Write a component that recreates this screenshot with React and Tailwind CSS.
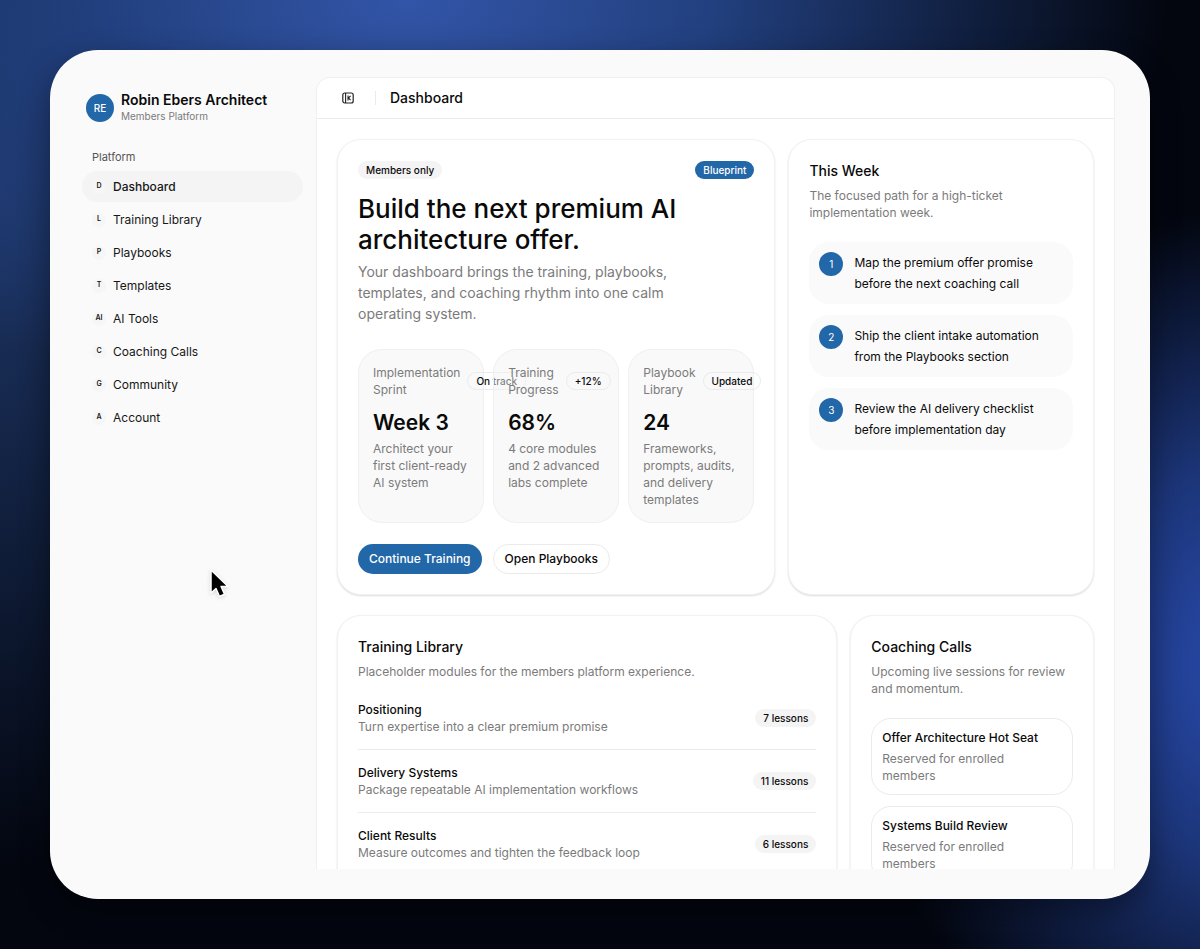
import React from 'react';

const navItems = [
  { key: 'D', label: 'Dashboard' },
  { key: 'L', label: 'Training Library' },
  { key: 'P', label: 'Playbooks' },
  { key: 'T', label: 'Templates' },
  { key: 'AI', label: 'AI Tools' },
  { key: 'C', label: 'Coaching Calls' },
  { key: 'G', label: 'Community' },
  { key: 'A', label: 'Account' },
];

const stats = [
  { label: 'Implementation Sprint', badge: 'On track', value: 'Week 3', text: 'Architect your first client-ready AI system' },
  { label: 'Training Progress', badge: '+12%', value: '68%', text: '4 core modules and 2 advanced labs complete' },
  { label: 'Playbook Library', badge: 'Updated', value: '24', text: 'Frameworks, prompts, audits, and delivery templates' },
];

const tasks = [
  'Map the premium offer promise before the next coaching call',
  'Ship the client intake automation from the Playbooks section',
  'Review the AI delivery checklist before implementation day',
];

const modules = [
  { title: 'Positioning', text: 'Turn expertise into a clear premium promise', lessons: '7 lessons' },
  { title: 'Delivery Systems', text: 'Package repeatable AI implementation workflows', lessons: '11 lessons' },
  { title: 'Client Results', text: 'Measure outcomes and tighten the feedback loop', lessons: '6 lessons' },
];

const calls = ['Offer Architecture Hot Seat', 'Systems Build Review'];

function Card({ children }) {
  return (
    <section className="min-w-0 rounded-[24px] border border-[#f2f2f2] bg-white px-5 pt-[21px] pb-5 shadow-[0_1px_2px_rgba(0,0,0,0.14)]">
      {children}
    </section>
  );
}

function CardHeader({ title, text }) {
  return (
    <>
      <h2 className="text-[14px] leading-[20px] font-medium">{title}</h2>
      <p className="mt-[6px] text-[12px] leading-[17px] text-[#7b7b7b]">{text}</p>
    </>
  );
}

function Badge({ className = '', children }) {
  return (
    <span className={`inline-flex h-[18px] shrink-0 items-center rounded-full px-2 text-[10px] font-medium whitespace-nowrap ${className}`}>
      {children}
    </span>
  );
}

function Sidebar() {
  return (
    <aside className="w-[234px] shrink-0 pt-[14px] pr-[13px]">
      <div className="flex items-center gap-[7px] pl-1">
        <div className="flex size-7 items-center justify-center rounded-full bg-[#2267a8] text-[10px] font-medium text-white">RE</div>
        <div>
          <div className="text-[14px] leading-[17px] font-semibold">Robin Ebers Architect</div>
          <div className="text-[10px] leading-[17px] text-[#7b7b7b]">Members Platform</div>
        </div>
      </div>
      <nav className="mt-[25px]">
        <h2 className="flex h-[14px] items-center pl-[10px] text-[11px] text-[#555]">Platform</h2>
        <ul className="mt-[7px] flex flex-col gap-[2px]">
          {navItems.map((item, i) => (
            <li key={item.key}>
              <a
                href="#"
                className={`flex h-[31px] items-center gap-[7px] rounded-full pl-[10px] text-[12px] text-[#171717] ${i === 0 ? 'bg-[#f4f4f4] font-medium' : ''}`}
              >
                <span className="flex size-[14px] items-center justify-center rounded-full bg-[#f6f6f6] text-[7px] font-semibold">{item.key}</span>
                {item.label}
              </a>
            </li>
          ))}
        </ul>
      </nav>
    </aside>
  );
}

function Hero() {
  return (
    <Card>
      <div className="flex items-center justify-between">
        <Badge className="bg-[#f4f4f5]">Members only</Badge>
        <Badge className="bg-[#2267a8] text-white">Blueprint</Badge>
      </div>
      <h1 className="mt-[14px] text-[26px] leading-[31px] font-medium">Build the next premium AI architecture offer.</h1>
      <p className="mt-[6px] max-w-[330px] text-[14px] leading-[21px] text-[#7b7b7b]">
        Your dashboard brings the training, playbooks, templates, and coaching rhythm into one calm operating system.
      </p>
      <div className="mt-[25px] grid grid-cols-3 gap-[9px]">
        {stats.map((stat) => (
          <div key={stat.label} className="relative min-w-0 rounded-[24px] border border-[#f0f0f0] bg-[#f3f3f3]/50 p-[14px]">
            <div className="flex items-center gap-[7px]">
              <div className="text-[12px] leading-[17px] text-[#7b7b7b]">{stat.label}</div>
              <Badge className="border border-[#ebebeb]">{stat.badge}</Badge>
            </div>
            <div className="mt-[11px] text-[21px] leading-7 font-semibold">{stat.value}</div>
            <p className="mt-[3px] text-[12px] leading-[17px] text-[#7b7b7b]">{stat.text}</p>
          </div>
        ))}
      </div>
      <div className="mt-[21px] flex gap-[11px]">
        <button className="h-[30px] rounded-full bg-[#2267a8] px-[11px] text-[12px] font-medium text-white">Continue Training</button>
        <button className="h-[30px] rounded-full border border-[#ebebeb] bg-white px-[11px] text-[12px] font-medium">Open Playbooks</button>
      </div>
    </Card>
  );
}

function ThisWeek() {
  return (
    <Card>
      <CardHeader title="This Week" text="The focused path for a high-ticket implementation week." />
      <ol className="mt-[21px] flex flex-col gap-[11px]">
        {tasks.map((task, i) => (
          <li key={task} className="flex gap-[11px] rounded-[20px] bg-[#fafafa] p-[10px]">
            <span className="flex size-6 shrink-0 items-center justify-center rounded-full bg-[#2267a8] text-[10px] text-white">{i + 1}</span>
            <span className="max-w-[196px] text-[12px] leading-[21px]">{task}</span>
          </li>
        ))}
      </ol>
    </Card>
  );
}

function TrainingLibrary() {
  return (
    <Card>
      <CardHeader title="Training Library" text="Placeholder modules for the members platform experience." />
      <ul className="mt-[7px]">
        {modules.map((m) => (
          <li key={m.title} className="flex items-center justify-between border-b border-[#ececec] py-[14px] last:border-b-0">
            <div className="text-[12px] leading-[17px]">
              <h3 className="font-medium">{m.title}</h3>
              <p className="text-[#7b7b7b]">{m.text}</p>
            </div>
            <Badge className="bg-[#f4f4f5]">{m.lessons}</Badge>
          </li>
        ))}
      </ul>
    </Card>
  );
}

function CoachingCalls() {
  return (
    <Card>
      <CardHeader title="Coaching Calls" text="Upcoming live sessions for review and momentum." />
      <ul className="mt-[21px] flex flex-col gap-[11px]">
        {calls.map((call) => (
          <li key={call} className="rounded-[20px] border border-[#ebebeb] p-[10px] text-[12px] leading-[17px]">
            <h3 className="font-medium">{call}</h3>
            <p className="mt-1 max-w-[150px] text-[#7b7b7b]">Reserved for enrolled members</p>
          </li>
        ))}
      </ul>
    </Card>
  );
}

export default function App() {
  return (
    <div className="relative h-screen overflow-hidden bg-[#03060f] bg-[radial-gradient(ellipse_760px_400px_at_34%_0%,#3355a8_0%,#22407f_40%,transparent_100%),radial-gradient(ellipse_420px_460px_at_106%_70%,#2a4db4_0%,#1c3578_45%,transparent_100%),radial-gradient(ellipse_240px_680px_at_0%_20%,#1e3768_0%,transparent_100%)] p-[50px] font-[Inter,sans-serif] text-[#0a0a0a]">
      <div className="flex h-full overflow-hidden rounded-[48px] bg-[#fafafa] pt-[27px] pr-[35px] pb-[30px] pl-8 shadow-[0_12px_30px_rgba(0,0,0,0.4)]">
        <Sidebar />
        <main className="min-w-0 flex-1 overflow-hidden rounded-t-[14px] border-x border-t border-[#f0f0f0] bg-white">
          <header className="flex h-[41px] items-center border-b border-[#ebebeb] pb-px pl-[25px]">
            <button aria-label="Toggle sidebar">
              <svg className="size-3" viewBox="0 0 12 12" fill="none" stroke="#222" strokeWidth="1.2">
                <rect x="0.8" y="1" width="10.400" height="10" rx="2" />
                <path d="M3.600 1v10M8.600 3.800 6.400 6l2.200 2.200M6 3.600v4.800" strokeWidth="1.100" />
              </svg>
            </button>
            <span className="ml-[21px] h-[14px] w-px bg-[#ebebeb]" />
            <span className="ml-[14px] text-[14px] font-medium">Dashboard</span>
          </header>
          <div className="flex flex-col gap-5 p-5">
            <div className="grid grid-cols-[439fr_306fr] gap-[13px]">
              <Hero />
              <ThisWeek />
            </div>
            <div className="grid grid-cols-[501fr_244fr] gap-[13px]">
              <TrainingLibrary />
              <CoachingCalls />
            </div>
          </div>
        </main>
      </div>
      <svg className="absolute top-[565px] left-[205px] h-[36px] w-[26px] drop-shadow" viewBox="0 0 26 36">
        <path d="M6 5v23l5-4.500 3.500 8 5-2.200-3.400-7.800h7z" fill="#000" stroke="#fff" strokeWidth="1.500" strokeLinejoin="round" />
      </svg>
    </div>
  );
}
